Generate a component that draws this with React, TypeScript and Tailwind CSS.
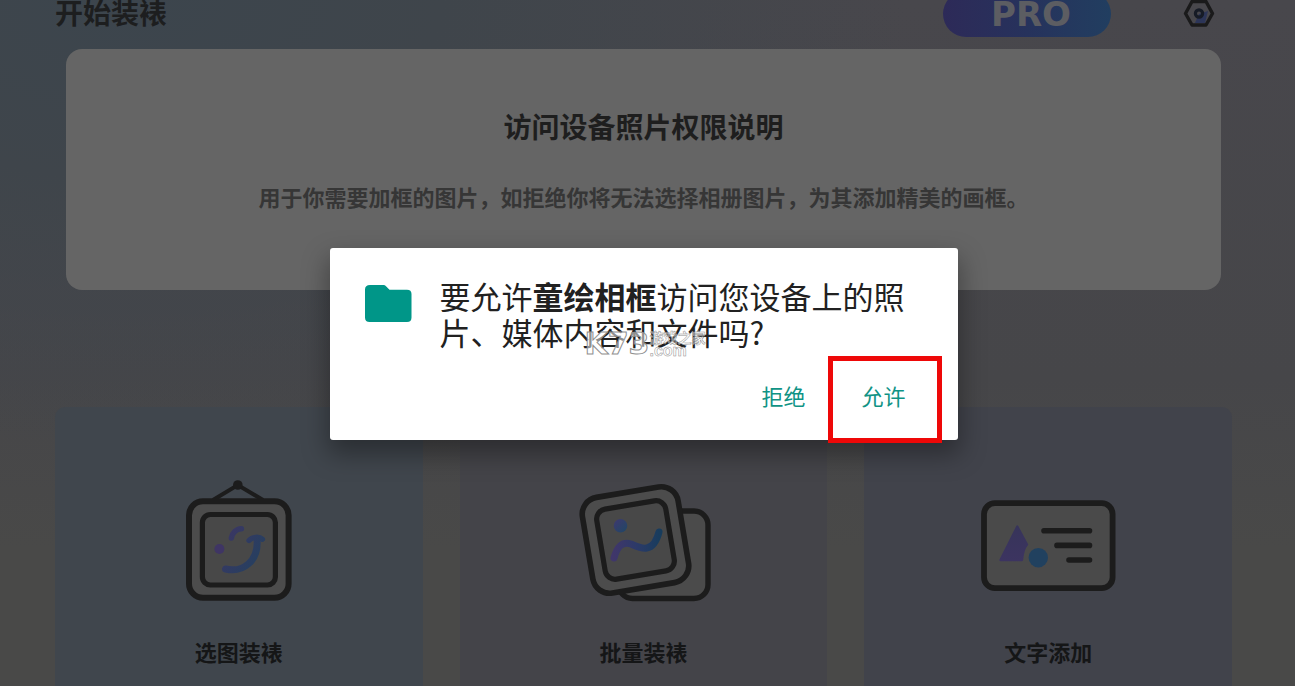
import React from 'react';

function SettingsIcon() {
  return (
    <svg width="32" height="30" viewBox="0 0 32 30" fill="none" aria-hidden="true">
      <path d="M16 15L25 12L22 24H12Z" fill="#2c3558" />
      <path d="M2.5 14.5L9 2.5H23L29.5 14.5L23 26H9Z" stroke="#1a1a1b" strokeWidth="3.4" strokeLinejoin="round" />
      <circle cx="16" cy="14.5" r="3.6" stroke="#161b26" strokeWidth="3.2" />
    </svg>
  );
}

function HangingFrameIcon() {
  return (
    <svg width="140" height="124" viewBox="0 0 140 124" fill="none" aria-hidden="true">
      <defs>
        <linearGradient id="smile" gradientUnits="userSpaceOnUse" x1="48" y1="50" x2="96" y2="80">
          <stop offset="0" stopColor="#3f3564" />
          <stop offset="1" stopColor="#24405f" />
        </linearGradient>
      </defs>
      <path d="M44 21L68.8 6L94 21" stroke="#1c1c1c" strokeWidth="4" />
      <circle cx="68.8" cy="6" r="4.8" fill="#1c1c1c" />
      <rect x="20" y="22.3" width="99.6" height="96.4" rx="14" fill="#4c4c4c" stroke="#1c1c1c" strokeWidth="6" />
      <rect x="33.4" y="35.5" width="73" height="70.5" rx="8" fill="#484848" stroke="#1c1c1c" strokeWidth="5.2" />
      <circle cx="50.4" cy="70" r="5" fill="#3f3564" />
      <g stroke="url(#smile)" strokeLinecap="round" strokeLinejoin="round">
        <path d="M62.4 59C63.4 54 67 50 72.4 49.7" strokeWidth="5.6" />
        <path d="M56.5 90C74 94 90 82 88 60" strokeWidth="7" />
        <path d="M80 61.5C83 58 90 57 93.4 60.2" strokeWidth="5.4" />
      </g>
    </svg>
  );
}

function StackedFramesIcon() {
  return (
    <svg width="140" height="124" viewBox="0 0 140 124" fill="none" aria-hidden="true">
      <defs>
        <linearGradient id="wave" gradientUnits="userSpaceOnUse" x1="40" y1="60" x2="88" y2="60">
          <stop offset="0" stopColor="#40366a" />
          <stop offset="0.5" stopColor="#2c3a68" />
          <stop offset="1" stopColor="#173c5c" />
        </linearGradient>
        <linearGradient id="sun" x1="0" y1="0" x2="1" y2="1">
          <stop offset="0" stopColor="#3f3870" />
          <stop offset="1" stopColor="#1f4764" />
        </linearGradient>
      </defs>
      <rect x="45.5" y="32" width="89.5" height="87.5" rx="14" fill="#4b4b4b" stroke="#1c1c1c" strokeWidth="5.4" />
      <g transform="rotate(-9.5 62.5 61)">
        <rect x="14" y="12.5" width="97" height="97" rx="17" fill="#4c4c4c" stroke="#1c1c1c" strokeWidth="5.6" />
        <rect x="27.5" y="25.5" width="70" height="71" rx="10" fill="#484848" stroke="#1c1c1c" strokeWidth="5.2" />
      </g>
      <circle cx="47.5" cy="46.7" r="6.8" fill="url(#sun)" />
      <path d="M41 79C44 68 49 62 58 65C67 69 80 76 86 53" stroke="url(#wave)" strokeWidth="7" strokeLinecap="round" />
    </svg>
  );
}

function TextCardIcon() {
  return (
    <svg width="140" height="124" viewBox="0 0 140 124" fill="none" aria-hidden="true">
      <defs>
        <linearGradient id="cone" x1="0" y1="0" x2="0" y2="1">
          <stop offset="0" stopColor="#37345a" />
          <stop offset="1" stopColor="#3c3460" />
        </linearGradient>
      </defs>
      <rect x="6" y="24.2" width="128.6" height="85" rx="11" fill="#4a4a4a" stroke="#1c1c1c" strokeWidth="5.8" />
      <path d="M39.3 47.5L49 65.5Q45 70 44 81H22.5Z" fill="url(#cone)" stroke="url(#cone)" strokeWidth="2.4" strokeLinejoin="round" />
      <circle cx="60.3" cy="78.7" r="9.7" fill="#21415f" />
      <path d="M66 51.8H111.5M79 66.4H111.5M91 81H111.5" stroke="#1c1c1c" strokeWidth="5.6" strokeLinecap="round" />
    </svg>
  );
}

const features = [
  { label: '选图装裱', Icon: HangingFrameIcon, tone: 'bg-[#40464d]' },
  { label: '批量装裱', Icon: StackedFramesIcon, tone: 'bg-[#444449]' },
  { label: '文字添加', Icon: TextCardIcon, tone: 'bg-[#41434b]' },
];

function PermissionDialog() {
  return (
    <div className="absolute inset-0 flex items-center justify-center pt-px pr-2">
      <div
        role="dialog"
        aria-modal="true"
        aria-labelledby="dialog-title"
        className="relative w-[628px] rounded-[3px] bg-white pt-8 pb-4 shadow-[0_12px_26px_2px_rgba(0,0,0,0.35)]"
      >
        <div className="flex pr-10 pl-[35px]">
          <svg width="47" height="37" viewBox="0 0 47 37" className="mt-[5px] shrink-0" aria-hidden="true">
            <path d="M5 0H18.5Q20 0 21 1.2L24.5 4.7H42Q46.5 4.7 46.5 9V32.5Q46.5 37 42 37H4.7Q0 37 0 32.5V4.5Q0 0 5 0Z" fill="#009688" />
          </svg>
          <h2 id="dialog-title" className="-mt-0.5 ml-7 text-[31px] leading-9 font-normal text-[#212121]">
            要允许<b className="font-bold">童绘相框</b>访问您设备上的照片、媒体内容和文件吗?
          </h2>
        </div>
        <div className="mt-[18px] flex justify-end pr-6 text-[22px] text-[#109385]">
          <button type="button" className="h-14 px-7">拒绝</button>
          <button type="button" className="relative h-14 px-7">
            允许
            <span className="pointer-events-none absolute -top-[12px] -right-2 -bottom-[19px] -left-[5px] border-5 border-[#ee0808]" />
          </button>
        </div>
        <div className="pointer-events-none absolute top-[81px] left-[255px] flex items-center text-white/50 [-webkit-text-stroke:1px_#8f8f8f]">
          <span className="font-['DejaVu_Sans'] text-[30px] leading-[30px] font-bold">K73</span>
          <span className="flex flex-col text-[14px] leading-[13px] font-bold whitespace-nowrap [-webkit-text-stroke:0.5px_#8f8f8f]">
            <span>游戏之家</span>
            <span className="font-['Liberation_Sans'] text-[16px]">.com</span>
          </span>
        </div>
      </div>
    </div>
  );
}

export default function App() {
  return (
    <div className="relative flex h-screen flex-col overflow-hidden bg-[radial-gradient(ellipse_60%_65%_at_10%_0%,#3c454d_0%,#3f454b_40%,transparent_100%),linear-gradient(180deg,#48474c_0%,#464649_55%,#494948_80%)] pr-2 font-['Noto_Sans_CJK_SC',sans-serif]">
      <header className="flex h-7 shrink-0 items-center px-[55px]">
        <h1 className="mb-1 text-[28px] leading-7 font-bold text-[#1d1e1f]">开始装裱</h1>
        <button
          type="button"
          className="ml-auto flex h-[46px] w-[168px] items-center justify-center rounded-full bg-linear-to-r from-[#2d2a58] via-[#26325c] to-[#213e60] pl-2 font-['DejaVu_Sans'] text-[34px] font-bold text-[#5c5d62]"
        >
          PRO
        </button>
        <button type="button" aria-label="设置" className="mr-[17px] ml-[72px]">
          <SettingsIcon />
        </button>
      </header>

      <section className="mx-[66px] mt-[21px] flex h-[241px] shrink-0 flex-col items-center rounded-2xl bg-[#656565] pt-[57px] text-center">
        <h2 className="text-[28px] leading-10 font-bold text-[#1e1e1e]">访问设备照片权限说明</h2>
        <p className="mt-[34px] text-[22px] leading-8 font-bold text-[#363636]">
          用于你需要加框的图片，如拒绝你将无法选择相册图片，为其添加精美的画框。
        </p>
      </section>

      <main className="mt-[117px] grid flex-1 grid-cols-3 gap-[37px] px-[55px]">
        {features.map(({ label, Icon, tone }) => (
          <button
            key={label}
            type="button"
            className={`flex flex-col items-center justify-start rounded-t-[10px] pt-[72px] ${tone}`}
          >
            <Icon />
            <span className="mt-8 text-[22px] leading-8 font-bold text-[#151617]">{label}</span>
          </button>
        ))}
      </main>

      <PermissionDialog />
    </div>
  );
}
